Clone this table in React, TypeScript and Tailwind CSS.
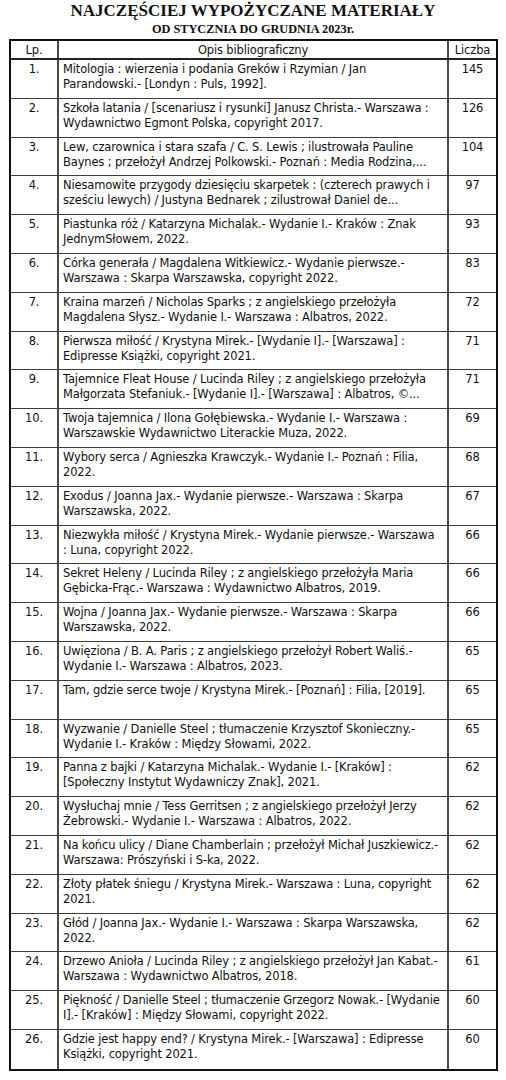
const rows = [
  {
    lines: ["Mitologia : wierzenia i podania Greków i Rzymian / Jan", "Parandowski.- [Londyn : Puls, 1992]."],
    count: 145,
  },
  {
    lines: ["Szkoła latania / [scenariusz i rysunki] Janusz Christa.- Warszawa :", "Wydawnictwo Egmont Polska, copyright 2017."],
    count: 126,
  },
  {
    lines: ["Lew, czarownica i stara szafa / C. S. Lewis ; ilustrowała Pauline", "Baynes ; przełożył Andrzej Polkowski.- Poznań : Media Rodzina,..."],
    count: 104,
  },
  {
    lines: ["Niesamowite przygody dziesięciu skarpetek : (czterech prawych i", "sześciu lewych) / Justyna Bednarek ; zilustrował Daniel de..."],
    count: 97,
  },
  {
    lines: ["Piastunka róż / Katarzyna Michalak.- Wydanie I.- Kraków : Znak", "JednymSłowem, 2022."],
    count: 93,
  },
  {
    lines: ["Córka generała / Magdalena Witkiewicz.- Wydanie pierwsze.-", "Warszawa : Skarpa Warszawska, copyright 2022."],
    count: 83,
  },
  {
    lines: ["Kraina marzeń / Nicholas Sparks ; z angielskiego przełożyła", "Magdalena Słysz.- Wydanie I.- Warszawa : Albatros, 2022."],
    count: 72,
  },
  {
    lines: ["Pierwsza miłość / Krystyna Mirek.- [Wydanie I].- [Warszawa] :", "Edipresse Książki, copyright 2021."],
    count: 71,
  },
  {
    lines: ["Tajemnice Fleat House / Lucinda Riley ; z angielskiego przełożyła", "Małgorzata Stefaniuk.- [Wydanie I].- [Warszawa] : Albatros, ©..."],
    count: 71,
  },
  {
    lines: ["Twoja tajemnica / Ilona Gołębiewska.- Wydanie I.- Warszawa :", "Warszawskie Wydawnictwo Literackie Muza, 2022."],
    count: 69,
  },
  {
    lines: ["Wybory serca / Agnieszka Krawczyk.- Wydanie I.- Poznań : Filia,", "2022."],
    count: 68,
  },
  {
    lines: ["Exodus / Joanna Jax.- Wydanie pierwsze.- Warszawa : Skarpa", "Warszawska, 2022."],
    count: 67,
  },
  {
    lines: ["Niezwykła miłość / Krystyna Mirek.- Wydanie pierwsze.- Warszawa", ": Luna, copyright 2022."],
    count: 66,
  },
  {
    lines: ["Sekret Heleny / Lucinda Riley ; z angielskiego przełożyła Maria", "Gębicka-Frąc.- Warszawa : Wydawnictwo Albatros, 2019."],
    count: 66,
  },
  {
    lines: ["Wojna / Joanna Jax.- Wydanie pierwsze.- Warszawa : Skarpa", "Warszawska, 2022."],
    count: 66,
  },
  {
    lines: ["Uwięziona / B. A. Paris ; z angielskiego przełożył Robert Waliś.-", "Wydanie I.- Warszawa : Albatros, 2023."],
    count: 65,
  },
  {
    lines: ["Tam, gdzie serce twoje / Krystyna Mirek.- [Poznań] : Filia, [2019]."],
    count: 65,
  },
  {
    lines: ["Wyzwanie / Danielle Steel ; tłumaczenie Krzysztof Skonieczny.-", "Wydanie I.- Kraków : Między Słowami, 2022."],
    count: 65,
  },
  {
    lines: ["Panna z bajki / Katarzyna Michalak.- Wydanie I.- [Kraków] :", "[Społeczny Instytut Wydawniczy Znak], 2021."],
    count: 62,
  },
  {
    lines: ["Wysłuchaj mnie / Tess Gerritsen ; z angielskiego przełożył Jerzy", "Żebrowski.- Wydanie I.- Warszawa : Albatros, 2022."],
    count: 62,
  },
  {
    lines: ["Na końcu ulicy / Diane Chamberlain ; przełożył Michał Juszkiewicz.-", "Warszawa: Prószyński i S-ka, 2022."],
    count: 62,
  },
  {
    lines: ["Złoty płatek śniegu / Krystyna Mirek.- Warszawa : Luna, copyright", "2021."],
    count: 62,
  },
  {
    lines: ["Głód / Joanna Jax.- Wydanie I.- Warszawa : Skarpa Warszawska,", "2022."],
    count: 62,
  },
  {
    lines: ["Drzewo Anioła / Lucinda Riley ; z angielskiego przełożył Jan Kabat.-", "Warszawa : Wydawnictwo Albatros, 2018."],
    count: 61,
  },
  {
    lines: ["Piękność / Danielle Steel ; tłumaczenie Grzegorz Nowak.- [Wydanie", "I].- [Kraków] : Między Słowami, copyright 2022."],
    count: 60,
  },
  {
    lines: ["Gdzie jest happy end? / Krystyna Mirek.- [Warszawa] : Edipresse", "Książki, copyright 2021."],
    count: 60,
  },
];

const App = () => {
  return (
    <div className="w-[506px] h-[1080px] bg-white text-[#111] overflow-hidden">
      {/* Title */}
      <div className="pt-px text-center font-['Liberation_Serif',serif] font-bold text-[#111]">
        <h1 className="text-[17px] leading-[20px]">
          NAJCZĘŚCIEJ WYPOŻYCZANE MATERIAŁY
        </h1>
        <p className="mt-px text-[12.3px] leading-[15px]">
          OD STYCZNIA DO GRUDNIA 2023r.
        </p>
      </div>

      {/* Table */}
      <div className="ml-[9px] mt-[2px] w-[489px] border-2 border-[#111] font-['DejaVu_Sans',sans-serif] text-[11.5px] leading-[15px] tracking-[-0.15px]">
        <div className="flex h-[19px] border-b-2 border-[#222]">
          <div className="w-[48px] shrink-0 border-r-2 border-[#4a4a4a] pt-[2px] text-center">
            Lp.
          </div>
          <div className="w-[390px] shrink-0 border-r-2 border-[#4a4a4a] pt-[2px] text-center">
            Opis bibliograficzny
          </div>
          <div className="flex-1 pt-[2px] text-center">Liczba</div>
        </div>

        {rows.map((row, index) => (
          <div
            key={index}
            className={`flex h-[38.8px] ${index < rows.length - 1 ? "border-b border-[#3c3c3c]" : ""}`}
          >
            <div className="w-[48px] shrink-0 border-r-2 border-[#4a4a4a] pt-[2px] text-center">
              {index + 1}.
            </div>
            <div className="w-[390px] shrink-0 border-r-2 border-[#4a4a4a] pl-[4px] pt-[2px] whitespace-nowrap overflow-hidden">
              {row.lines.map((line, i) => (
                <div key={i}>{line}</div>
              ))}
            </div>
            <div className="flex-1 pt-[2px] text-center">{row.count}</div>
          </div>
        ))}
      </div>
    </div>
  );
};

export default App;
